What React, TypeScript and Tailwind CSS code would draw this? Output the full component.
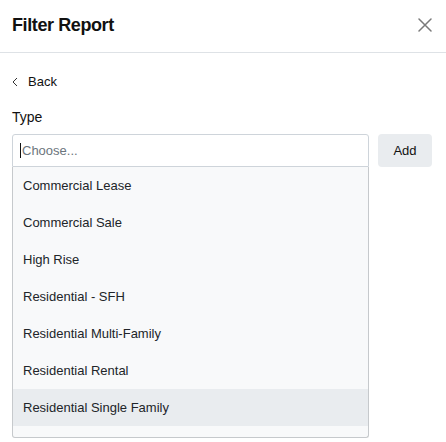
import React from "react";

const items = [
  "Commercial Lease",
  "Commercial Sale",
  "High Rise",
  "Residential - SFH",
  "Residential Multi-Family",
  "Residential Rental",
  "Residential Single Family",
];

export default function App() {
  return (
    <div
      className="w-[446px] h-[442px] bg-white text-[#212529] overflow-hidden"
      style={{ fontFamily: '"Liberation Sans", Arial, sans-serif' }}
    >
      <div className="h-[53px] flex items-center justify-between pl-3 pr-[14px] border-b border-[#dee2e6]">
        <h1 className="text-[18px] font-semibold tracking-[-0.4px] text-[#111] leading-none mt-[-2px]">
          Filter Report
        </h1>
        <svg width="14" height="14" viewBox="0 0 14 14" className="mt-[-2px]">
          <path d="M1 1 L13 13 M13 1 L1 13" stroke="#7a7a7a" strokeWidth="1.5" strokeLinecap="round" />
        </svg>
      </div>
      <div className="px-3">
        <div className="flex items-center h-[18px] mt-[20px] gap-[10px]">
          <svg width="6" height="10" viewBox="0 0 6 10">
            <path d="M5 1 L1 5 L5 9" stroke="#333" strokeWidth="1" fill="none" />
          </svg>
          <span className="text-[13px] font-medium text-[#111]">Back</span>
        </div>
        <div className="mt-[17px] h-[18px] flex items-center text-[14px] text-[#111]">Type</div>
        <div className="flex gap-[9px] mt-[8px] pr-[2px]">
          <div className="flex-1">
            <div className="h-[33px] border border-[#ced4da] rounded-t-[3px] flex items-center pl-[7px] bg-white">
              <span className="w-px h-[15px] bg-[#111]" />
              <span className="text-[13px] text-[#6c757d] ml-px">Choose...</span>
            </div>
            <div className="border border-t-0 border-[#c6c9cc] rounded-b-[3px] bg-[#f8f9fa] pb-[11px]">
              {items.map((it, i) => (
                <div
                  key={it}
                  className={
                    "h-[37px] flex items-center pl-[10px] text-[13px] text-[#212529] " +
                    (i === items.length - 1 ? "bg-[#e9ecef]" : "")
                  }
                >
                  {it}
                </div>
              ))}
            </div>
          </div>
          <button className="w-[54px] h-[33px] rounded-[4px] bg-[#e9ecef] text-[13px] text-[#111] flex items-center justify-center">
            Add
          </button>
        </div>
      </div>
    </div>
  );
}
